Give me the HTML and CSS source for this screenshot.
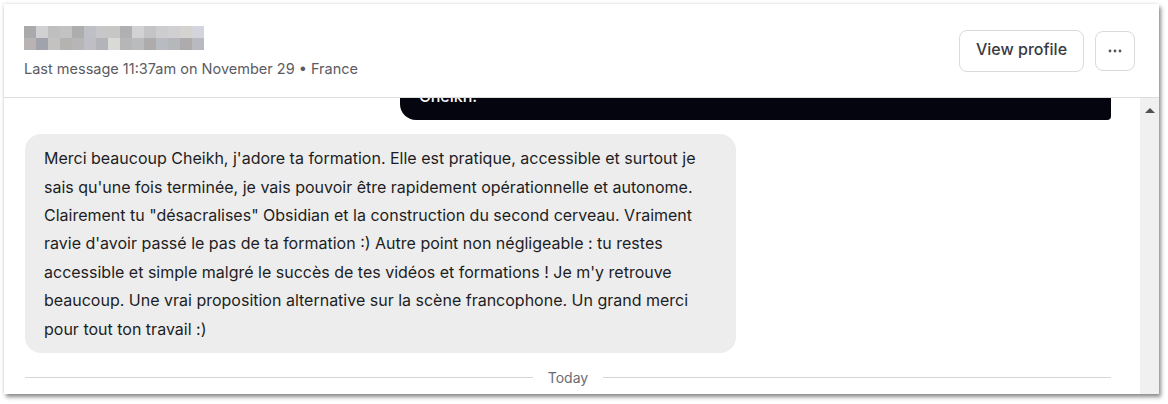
FILE: index.html
```html
<!DOCTYPE html>
<html lang="fr">
<head>
<meta charset="utf-8">
<title>Conversation</title>
<link rel="stylesheet" href="styles.css">
</head>
<body>
<div class="window">
  <header class="header">
    <div class="who">
      <div class="name-blur" aria-label="Nom masqué"></div>
      <div class="meta">Last message 11:37am on November 29 • France</div>
    </div>
    <div class="actions">
      <button class="btn btn-profile">View profile</button>
      <button class="btn btn-more" aria-label="More">
        <svg width="14" height="4" viewBox="0 0 14 4"><circle cx="2" cy="2" r="1.4"/><circle cx="7" cy="2" r="1.4"/><circle cx="12" cy="2" r="1.4"/></svg>
      </button>
    </div>
  </header>
  <div class="body">
    <div class="messages">
      <div class="bubble bubble-out">Merci pour ton message, à bientôt dans la formation !<br>Cheikh!</div>
      <div class="bubble bubble-in">Merci beaucoup Cheikh, j'adore ta formation. Elle est pratique, accessible et surtout je sais qu'une fois terminée, je vais pouvoir être rapidement opérationnelle et autonome. Clairement tu "désacralises" Obsidian et la construction du second cerveau. Vraiment ravie d'avoir passé le pas de ta formation :) Autre point non négligeable : tu restes accessible et simple malgré le succès de tes vidéos et formations ! Je m'y retrouve beaucoup. Une vrai proposition alternative sur la scène francophone. Un grand merci pour tout ton travail :)</div>
      <div class="divider"><span class="divider-line"></span><span class="divider-text">Today</span><span class="divider-line"></span></div>
    </div>
    <div class="scrollbar">
      <div class="scroll-arrow"></div>
    </div>
  </div>
</div>
</body>
</html>
```
FILE: styles.css
```css
* { box-sizing: border-box; }
html, body { margin: 0; padding: 0; background: #fff; }
body {
  font-family: Inter, "Noto Sans", "Liberation Sans", sans-serif;
  color: #1b1b1f;
  padding: 4px 9px 10px 4px;
}
.window {
  width: 1155px;
  height: 390px;
  background: #fff;
  box-shadow: 2px 3px 4px rgba(0,0,0,0.45), -1px -1px 3px rgba(0,0,0,0.08);
  display: flex;
  flex-direction: column;
  overflow: hidden;
}
.header {
  height: 94px;
  flex: none;
  border-bottom: 1px solid #dcdcdc;
  display: flex;
  align-items: center;
  justify-content: space-between;
  padding: 0 24px 0 20px;
}
.who { display: flex; flex-direction: column; padding-top: 2px; }
.name-blur {
  width: 180px;
  height: 24px;
  background:
    linear-gradient(90deg,
      #aaa9ab 0 12px, #d1d1d3 12px 24px, #c0bfc0 24px 36px, #c3c2c2 36px 48px, #aeadad 48px 60px,
      #bfc0c6 60px 72px, #c7c7ca 72px 84px, #c8c7c5 84px 96px, #b0b0b3 96px 108px, #d2d2d5 108px 120px,
      #c4c4c6 120px 132px, #cdcdd0 132px 144px, #d0d0d2 144px 156px, #d5d3cf 156px 168px, #d3d4dc 168px 180px) top / 100% 12px no-repeat,
    linear-gradient(90deg,
      #b9b4b3 0 12px, #a0a3ac 12px 24px, #c4c2c0 24px 36px, #b4b3b0 36px 48px, #b6b6b6 48px 60px,
      #bebec4 60px 72px, #b3b4ba 72px 84px, #d9d9d6 84px 96px, #b6b6b9 96px 108px, #babbbd 108px 120px,
      #aeabac 120px 132px, #b9bbc2 132px 144px, #b5b7ba 144px 156px, #aeabad 156px 168px, #b9babf 168px 180px) bottom / 100% 12px no-repeat;
}
.meta {
  margin-top: 10px;
  font-size: 14.5px;
  line-height: 18px;
  color: #5b5b63;
}
.actions { display: flex; align-items: center; gap: 11px; }
.btn {
  font-family: inherit;
  background: #fff;
  border: 1px solid #dadada;
  border-radius: 8px;
  color: #3a3a42;
  cursor: pointer;
  display: flex;
  align-items: center;
  justify-content: center;
}
.btn-profile {
  height: 42px;
  width: 125px;
  font-size: 16px;
  font-weight: 500;
  padding: 0 0 3px;
}
.btn-more { width: 40px; height: 40px; padding: 0; }
.btn-more svg { fill: #555; }
.body {
  flex: 1;
  display: flex;
  min-height: 0;
}
.messages {
  flex: 1;
  min-width: 0;
  overflow: hidden;
  display: flex;
  flex-direction: column;
  justify-content: flex-end;
  padding: 0 29px 7px 21px;
}
.bubble {
  flex: none;
  width: 711px;
  font-size: 16px;
  line-height: 28.4px;
  padding: 10px 19px;
  border-radius: 16px;
}
.bubble-out {
  align-self: flex-end;
  background: #05050f;
  color: #fff;
  font-weight: 500;
  border-radius: 16px 16px 4px 16px;
}
.bubble-in {
  margin-top: 14px;
  background: #ededed;
  color: #1d1d24;
}
.divider {
  flex: none;
  margin-top: 14px;
  height: 20px;
  display: flex;
  align-items: center;
}
.divider-line { flex: 1; height: 1px; background: #d6d6d6; }
.divider-text {
  padding: 0 15px;
  font-size: 14px;
  color: #6b6b73;
}
.scrollbar {
  width: 19px;
  flex: none;
  background: #f0f0f0;
  display: flex;
  justify-content: center;
  padding-top: 10px;
}
.scroll-arrow {
  width: 0; height: 0;
  border-left: 5px solid transparent;
  border-right: 5px solid transparent;
  border-bottom: 5px solid #505050;
}
```
